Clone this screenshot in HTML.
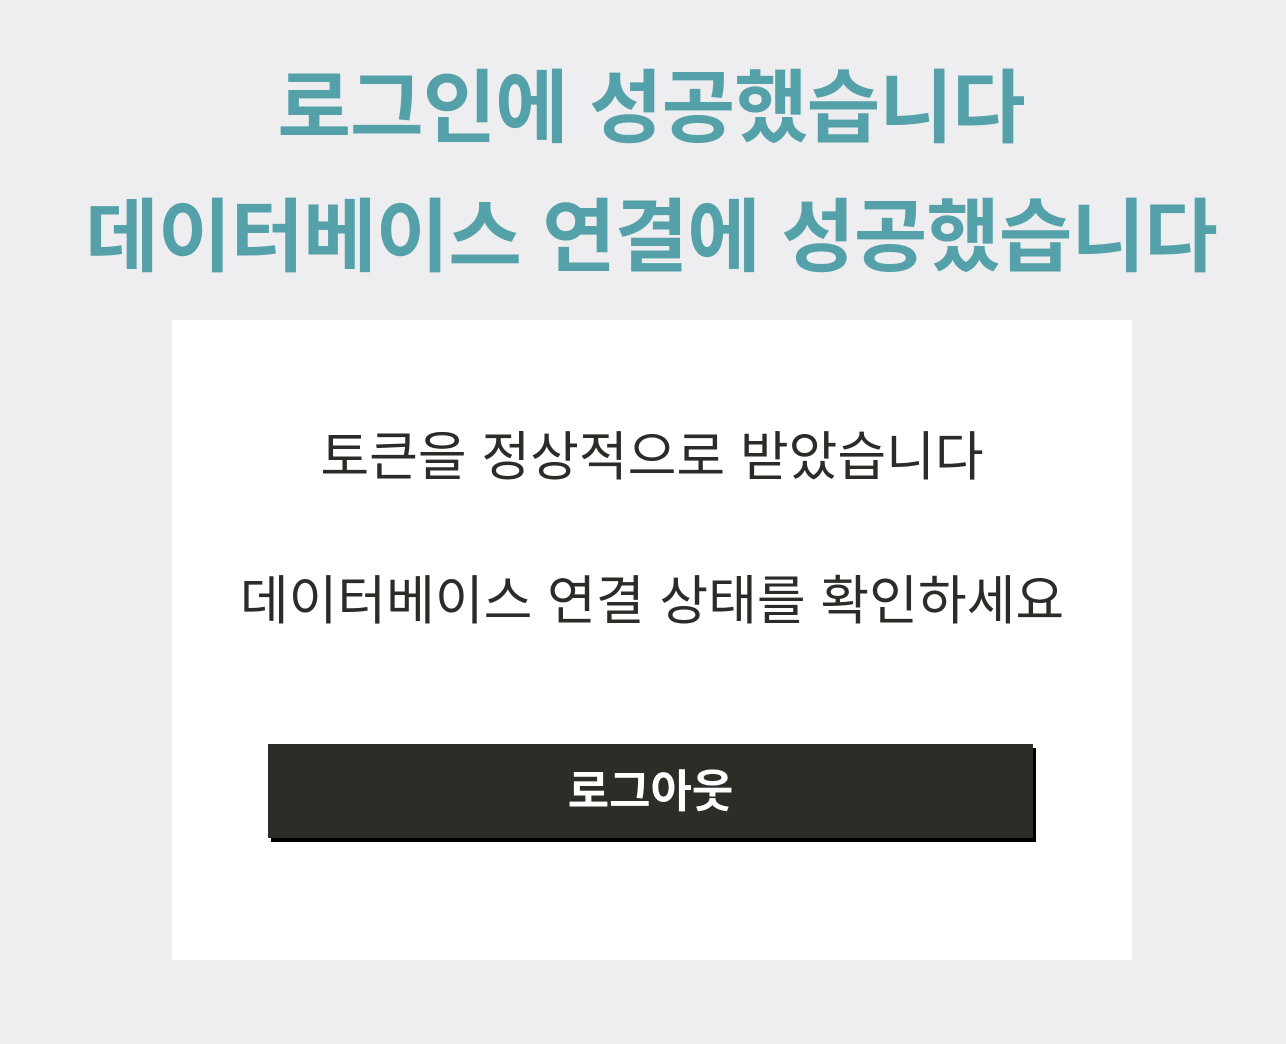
<!DOCTYPE html>
<html><head><meta charset="utf-8"><style>
html,body{margin:0;padding:0}
body{width:1286px;height:1044px;background:#eeedf0;position:relative;overflow:hidden;font-family:"Liberation Sans","Noto Sans CJK KR",sans-serif}
.h{position:absolute;left:8px;width:1286px;text-align:center;color:#55a1a9;font-weight:700;font-size:80px;line-height:1;white-space:nowrap;letter-spacing:-1px}
.box{position:absolute;left:172px;top:320px;width:960px;height:640px;background:#fff}
.t{position:absolute;left:0;width:960px;text-align:center;color:#2b2b28;font-size:53px;line-height:1;white-space:nowrap}
.btn{position:absolute;left:96px;top:424px;width:765px;height:94px;background:#2d2d28;box-shadow:3px 4px 0 #000;color:#fff;font-weight:700;font-size:45px;text-align:center;line-height:96px}
</style></head><body>
<div class="h" style="top:69px">로그인에 성공했습니다</div>
<div class="h" style="top:198px">데이터베이스 연결에 성공했습니다</div>
<div class="box">
<div class="t" style="top:111px">토큰을 정상적으로 받았습니다</div>
<div class="t" style="top:255px">데이터베이스 연결 상태를 확인하세요</div>
<div class="btn">로그아웃</div>
</div>
</body></html>
